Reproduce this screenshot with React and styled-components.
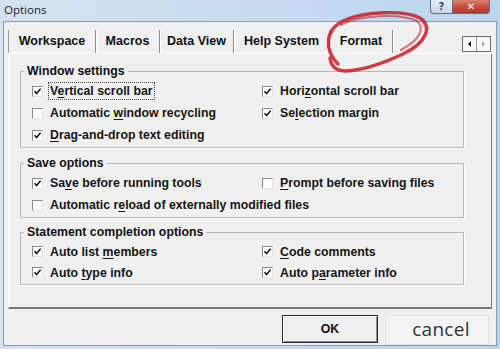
import React from "react";
import styled, { createGlobalStyle } from "styled-components";

const GlobalStyle = createGlobalStyle`
  html, body { margin: 0; padding: 0; }
  body { font-family: "Liberation Sans", Arial, sans-serif; }
`;

const Frame = styled.div`
  position: relative;
  width: 500px;
  height: 349px;
  box-sizing: border-box;
  padding: 0 3px 3px 3px;
  display: flex;
  flex-direction: column;
  background: linear-gradient(90deg, #d6e2ef 0%, #c9dcf1 45%, #bcd5ef 100%);
  overflow: hidden;
`;

const TitleBar = styled.div`
  height: 22px;
  display: flex;
  align-items: flex-start;
`;

const Caption = styled.div`
  font-family: "Open Sans", sans-serif;
  font-size: 11.5px;
  color: #1c1c1c;
  margin: 2px 0 0 1px;
`;

const TitleButtons = styled.div`
  margin-left: auto;
  margin-right: 7px;
  display: flex;
`;

const TitleButton = styled.div`
  width: ${p => p.w}px;
  height: 14px;
  box-sizing: border-box;
  border: 1px solid #5b6e84;
  border-top: none;
  display: flex;
  align-items: center;
  justify-content: center;
  font-family: "DejaVu Sans", sans-serif;
  font-size: 10px;
  font-weight: bold;
  color: ${p => (p.danger ? "#fff" : "#3e4e62")};
  background: ${p =>
    p.danger
      ? "linear-gradient(#d9836f, #c4473a 60%, #b8372c)"
      : "linear-gradient(#e4ecf5, #c9d7e6)"};
  border-radius: ${p => (p.danger ? "0 0 4px 0" : "0 0 0 4px")};
  border-left: ${p => (p.danger ? "none" : "1px solid #5b6e84")};
`;

const Client = styled.div`
  flex: 1;
  display: flex;
  flex-direction: column;
  background: #f0f0f0;
  border: 1px solid #8e9aa8;
`;

const TabStrip = styled.div`
  height: 31px;
  display: flex;
  align-items: flex-end;
  padding-left: 4px;
`;

const Tab = styled.div`
  width: ${p => p.w}px;
  height: 23px;
  box-sizing: border-box;
  display: flex;
  align-items: center;
  justify-content: center;
  font-size: 12.5px;
  font-weight: bold;
  color: #111;
  border-right: 1px solid #8c8c8c;
  box-shadow: 1px 0 0 #ffffff;
  border-left: ${p => (p.first ? "1px solid #9a9a9a" : "none")};
  padding-bottom: 1px;
`;

const Scroller = styled.div`
  margin-left: auto;
  margin-right: 5px;
  margin-bottom: 1px;
  display: flex;
  border: 1px solid #6e6e6e;
  background: #f7f7f7;
`;

const ScrollArrow = styled.div`
  width: 13px;
  height: 14px;
  display: flex;
  align-items: center;
  justify-content: center;
  border-left: ${p => (p.right ? "1px solid #9a9a9a" : "none")};
  &::before {
    content: "";
    border-top: 3px solid transparent;
    border-bottom: 3px solid transparent;
    ${p =>
      p.right
        ? "border-left: 3px solid #a8a8a8;"
        : "border-right: 3px solid #111;"}
  }
`;

const Panel = styled.div`
  margin-left: 4px;
  width: 484px;
  height: 256px;
  box-sizing: border-box;
  border-top: 1px solid #ffffff;
  border-left: 1px solid #ffffff;
  border-right: 1px solid #7a7a7a;
  border-bottom: 2px solid #757575;
  padding: 0 0 0 11px;
`;

const Group = styled.fieldset`
  width: 444px;
  box-sizing: border-box;
  margin: ${p => p.gap}px 0 0 0;
  padding: 2px 0 1px 0;
  border: 1px solid #b9b9b9;
  box-shadow: 1px 1px 0 #ffffff;
  min-width: 0;
`;

const Legend = styled.legend`
  margin-left: 3px;
  padding: 0 3px;
  font-size: 12.3px;
  font-weight: bold;
  line-height: 14px;
  color: #111;
`;

const Rows = styled.div`
  display: grid;
  grid-template-columns: 230px 1fr;
  grid-auto-rows: ${p => p.rowH || 22}px;
  padding-left: 11px;
`;

const Row = styled.div`
  display: flex;
  align-items: center;
  gap: 6px;
  grid-column: ${p => p.col};
  grid-row: ${p => p.row};
`;

const Box = styled.div`
  width: 11px;
  height: 11px;
  box-sizing: border-box;
  border-top: 1px solid #8a8a8a;
  border-left: 1px solid #8a8a8a;
  border-right: 1px solid #e2e2e2;
  border-bottom: 1px solid #e2e2e2;
  background: #ffffff;
  display: flex;
  align-items: center;
  justify-content: center;
`;

const Label = styled.span`
  font-size: 12.3px;
  font-weight: bold;
  color: #161616;
  padding: 1px 1px;
  outline: ${p => (p.focus ? "1px dotted #444" : "none")};
  outline-offset: 0;
  u { text-decoration-thickness: 1px; text-underline-offset: 2px; }
`;

const Footer = styled.div`
  flex: 1;
  display: flex;
  justify-content: flex-end;
  align-items: flex-start;
  gap: 7px;
  padding: 6px 7px 0 0;
`;

const OkButton = styled.div`
  width: 96px;
  height: 28px;
  box-sizing: border-box;
  border: 1px solid #2e2e2e;
  box-shadow: inset 1px 1px 0 #ffffff, inset -1px -1px 0 #8a8a8a;
  display: flex;
  align-items: center;
  justify-content: center;
  font-size: 12.3px;
  font-weight: bold;
  color: #111;
`;

const CancelButton = styled.div`
  width: 104px;
  height: 30px;
  box-sizing: border-box;
  border: 1px solid #e0e0e0;
  background: #f4f4f4;
  display: flex;
  align-items: center;
  justify-content: center;
  font-family: "Open Sans", sans-serif;
  font-size: 19px;
  color: #333;
  letter-spacing: 0.3px;
  padding: 0 0 3px 8px;
`;

const Scribble = styled.svg`
  position: absolute;
  left: 0;
  top: 0;
  pointer-events: none;
`;

const Check = () => (
  <svg width="9" height="9" viewBox="0 0 9 9">
    <path d="M1.5 4.2 L3.6 6.6 L7.6 1.8" fill="none" stroke="#1a1a1a" strokeWidth="1.6" />
  </svg>
);

const CheckRow = ({ checked, col, row, focus, children }) => (
  <Row col={col} row={row}>
    <Box>{checked && <Check />}</Box>
    <Label focus={focus}>{children}</Label>
  </Row>
);

const tabs = [
  { name: "Workspace", w: 88 },
  { name: "Macros", w: 64 },
  { name: "Data View", w: 74 },
  { name: "Help System", w: 96 },
  { name: "Format", w: 63 },
];

export default function App() {
  return (
    <>
      <GlobalStyle />
      <Frame>
        <TitleBar>
          <Caption>Options</Caption>
          <TitleButtons>
            <TitleButton w={23}>?</TitleButton>
            <TitleButton w={37} danger>✕</TitleButton>
          </TitleButtons>
        </TitleBar>
        <Client>
          <TabStrip>
            {tabs.map((t, i) => (
              <Tab key={t.name} w={t.w} first={i === 0}>{t.name}</Tab>
            ))}
            <Scroller>
              <ScrollArrow />
              <ScrollArrow right />
            </Scroller>
          </TabStrip>
          <Panel>
            <Group gap={10}>
              <Legend>Window settings</Legend>
              <Rows>
                <CheckRow checked col={1} row={1} focus>V<u>e</u>rtical scroll bar</CheckRow>
                <CheckRow col={1} row={2}>Automatic <u>w</u>indow recycling</CheckRow>
                <CheckRow checked col={1} row={3}><u>D</u>rag-and-drop text editing</CheckRow>
                <CheckRow checked col={2} row={1}>Hori<u>z</u>ontal scroll bar</CheckRow>
                <CheckRow checked col={2} row={2}>Se<u>l</u>ection margin</CheckRow>
              </Rows>
            </Group>
            <Group gap={8}>
              <Legend>Save options</Legend>
              <Rows>
                <CheckRow checked col={1} row={1}>Sa<u>v</u>e before running tools</CheckRow>
                <CheckRow col={2} row={1}><u>P</u>rompt before saving files</CheckRow>
                <CheckRow col="1 / 3" row={2}>Automatic r<u>e</u>load of externally modified files</CheckRow>
              </Rows>
            </Group>
            <Group gap={7}>
              <Legend>Statement completion options</Legend>
              <Rows rowH={21}>
                <CheckRow checked col={1} row={1}>Auto list <u>m</u>embers</CheckRow>
                <CheckRow checked col={1} row={2}>Auto <u>t</u>ype info</CheckRow>
                <CheckRow checked col={2} row={1}><u>C</u>ode comments</CheckRow>
                <CheckRow checked col={2} row={2}>Auto p<u>a</u>rameter info</CheckRow>
              </Rows>
            </Group>
          </Panel>
          <Footer>
            <OkButton>OK</OkButton>
            <CancelButton>cancel</CancelButton>
          </Footer>
        </Client>
        <Scribble width="500" height="349" viewBox="0 0 500 349">
          <path
            d="M338 64 C 324 50, 325 30, 343 21 C 364 11, 405 10, 420 18 C 432 26, 428 42, 403 54 C 386 62, 366 70, 346 71 C 336 71, 331 66, 330 58"
            fill="none"
            stroke="#c8222e"
            strokeWidth="3.4"
            strokeLinecap="round"
            opacity="0.88"
          />
          <path
            d="M341 25 C 360 15, 399 13, 417 21 C 425 28, 421 39, 401 50"
            fill="none"
            stroke="#c8222e"
            strokeWidth="2"
            strokeLinecap="round"
            opacity="0.6"
          />
        </Scribble>
      </Frame>
    </>
  );
}
